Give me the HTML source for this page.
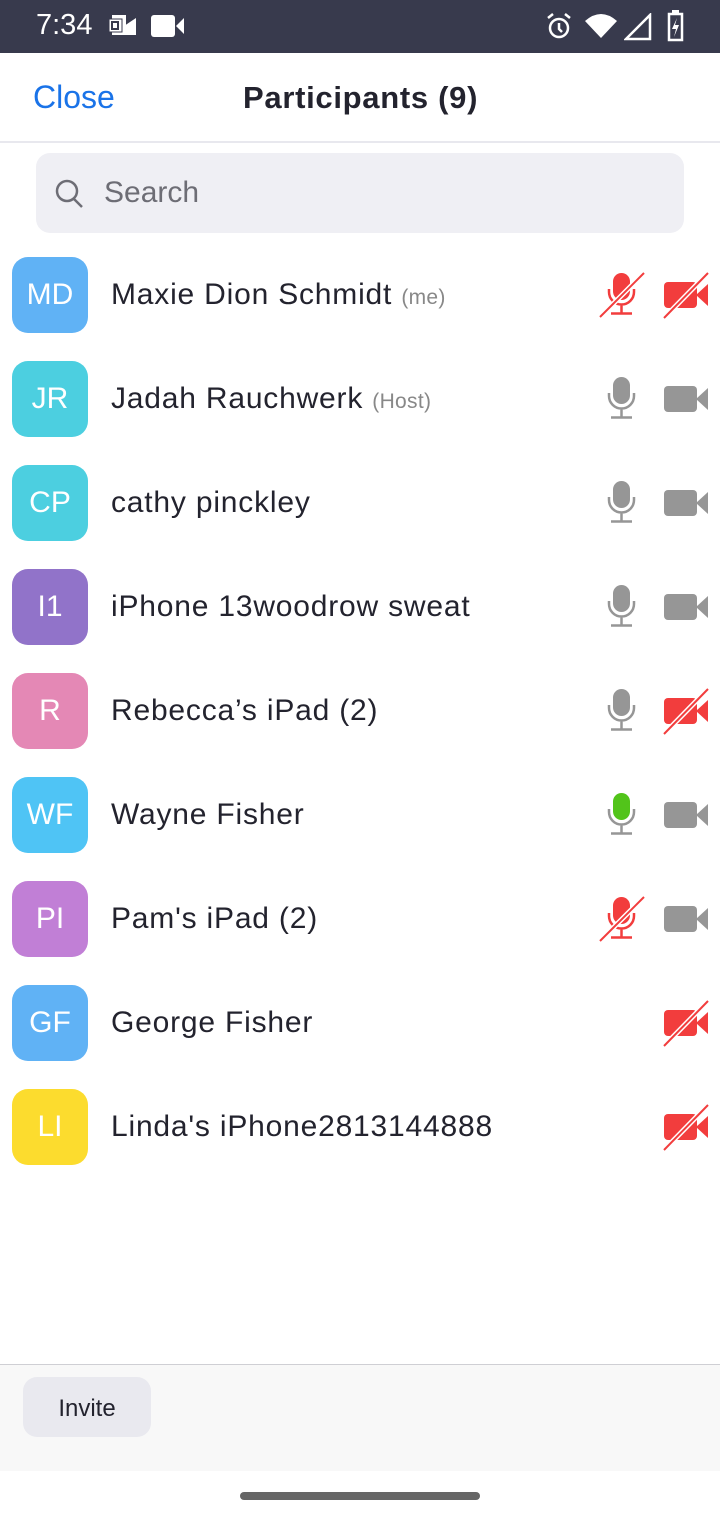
<!DOCTYPE html>
<html><head><meta charset="utf-8">
<style>
*{margin:0;padding:0;box-sizing:border-box}
body{width:720px;height:1520px;background:#fff;font-family:"Liberation Sans",sans-serif;position:relative;overflow:hidden}
.sb{position:absolute;left:0;top:0;width:720px;height:53px;background:#383a4d;color:#fff}
.abs{position:absolute}
.av{position:absolute;left:12px;width:76px;height:76px;border-radius:16px;color:#fff;font-size:30px;display:flex;align-items:center;justify-content:center}
.nm{position:absolute;left:111px;font-size:30px;letter-spacing:0.8px;color:#23232e;line-height:36px}
.nm span{font-size:21px;color:#888;letter-spacing:0.3px}
svg.ic{position:absolute}
</style></head><body>
<div class="sb">
<div class="abs" style="left:36px;top:9px;font-size:29px;">7:34</div>
<svg class="abs" style="left:108px;top:13px" width="30" height="26" viewBox="0 0 30 26"><rect x="4" y="2" width="14" height="20" fill="#fff"/><rect x="1" y="6" width="13" height="13" fill="#fff" stroke="#383a4d" stroke-width="1"/><rect x="4" y="9" width="6" height="7" fill="none" stroke="#383a4d" stroke-width="2"/><path d="M16 13 L28 5 V22 H16Z" fill="#fff"/></svg>
<svg class="abs" style="left:151px;top:15px" width="34" height="22"><rect x="0" y="0" width="24" height="22" rx="3" fill="#fff"/><path d="M25 11 L33 3 V19Z" fill="#fff"/></svg>
<svg class="abs" style="left:545px;top:12px" width="28" height="28" viewBox="0 0 28 28" fill="none" stroke="#fff" stroke-width="2.5"><circle cx="14" cy="16" r="9"/><path d="M14 11v6l3 3M3 6l5-4M25 6l-5-4"/></svg>
<svg class="abs" style="left:584px;top:13px" width="34" height="26"><path d="M1 8 Q17 -6 33 8 L17 25Z" fill="#fff"/></svg>
<svg class="abs" style="left:624px;top:13px" width="28" height="28"><path d="M2 26 L26 2 V26Z" fill="none" stroke="#fff" stroke-width="2.5"/></svg>
<svg class="abs" style="left:667px;top:10px" width="18" height="32"><rect x="5" y="0" width="7" height="4" fill="#fff"/><rect x="2" y="4" width="13" height="26" fill="none" stroke="#fff" stroke-width="2.5"/><path d="M10 8 L5 19 H9 L7 27 L12 15 H8Z" fill="#fff"/></svg>
</div>
<div class="abs" style="left:33px;top:79px;font-size:32px;color:#1a73e8">Close</div>
<div class="abs" style="left:243px;top:80px;font-size:31px;letter-spacing:0.7px;color:#23232e;font-weight:bold">Participants (9)</div>
<div class="abs" style="left:0;top:141px;width:720px;height:2px;background:#e8e8ee"></div>
<div class="abs" style="left:36px;top:153px;width:648px;height:80px;background:#efeff4;border-radius:14px"></div>
<svg class="abs" style="left:54px;top:178px" width="32" height="32" fill="none" stroke="#6d6d75" stroke-width="2.5"><circle cx="13" cy="13" r="10"/><path d="M20 21l8 8"/></svg>
<div class="abs" style="left:104px;top:176px;font-size:30px;color:#6d6d75">Search</div>

<div class="av" style="top:257px;background:#60b2f5">MD</div><div class="nm" style="top:277px">Maxie Dion Schmidt <span>(me)</span></div>
<div class="av" style="top:361px;background:#4ccfe0">JR</div><div class="nm" style="top:381px">Jadah Rauchwerk <span>(Host)</span></div>
<div class="av" style="top:465px;background:#4ccfe0">CP</div><div class="nm" style="top:485px">cathy pinckley</div>
<div class="av" style="top:569px;background:#9173c9">I1</div><div class="nm" style="top:589px">iPhone 13woodrow sweat</div>
<div class="av" style="top:673px;background:#e488b5">R</div><div class="nm" style="top:693px">Rebecca’s iPad (2)</div>
<div class="av" style="top:777px;background:#4fc4f5">WF</div><div class="nm" style="top:797px">Wayne Fisher</div>
<div class="av" style="top:881px;background:#c17fd6">PI</div><div class="nm" style="top:901px">Pam's iPad (2)</div>
<div class="av" style="top:985px;background:#60b2f5">GF</div><div class="nm" style="top:1005px">George Fisher</div>
<div class="av" style="top:1089px;background:#fcdc2e">LI</div><div class="nm" style="top:1109px">Linda's iPhone2813144888</div>

<svg class="ic" style="left:598px;top:271px" width="48" height="48"><rect x="15" y="2" width="17" height="27" rx="8.5" fill="#f23d3d"/><path d="M11 18v3a12.5 12.5 0 0 0 25 0v-3M23.5 33.5V42M13 42.5h21" fill="none" stroke="#f23d3d" stroke-width="2.5"/><path d="M2 46L46 2" stroke="#fff" stroke-width="5"/><path d="M2 46L46 2" stroke="#f23d3d" stroke-width="2"/></svg>
<svg class="ic" style="left:598px;top:375px" width="48" height="48"><rect x="15" y="2" width="17" height="27" rx="8.5" fill="#969696"/><path d="M11 18v3a12.5 12.5 0 0 0 25 0v-3M23.5 33.5V42M13 42.5h21" fill="none" stroke="#969696" stroke-width="2.5"/></svg>
<svg class="ic" style="left:598px;top:479px" width="48" height="48"><rect x="15" y="2" width="17" height="27" rx="8.5" fill="#969696"/><path d="M11 18v3a12.5 12.5 0 0 0 25 0v-3M23.5 33.5V42M13 42.5h21" fill="none" stroke="#969696" stroke-width="2.5"/></svg>
<svg class="ic" style="left:598px;top:583px" width="48" height="48"><rect x="15" y="2" width="17" height="27" rx="8.5" fill="#969696"/><path d="M11 18v3a12.5 12.5 0 0 0 25 0v-3M23.5 33.5V42M13 42.5h21" fill="none" stroke="#969696" stroke-width="2.5"/></svg>
<svg class="ic" style="left:598px;top:687px" width="48" height="48"><rect x="15" y="2" width="17" height="27" rx="8.5" fill="#969696"/><path d="M11 18v3a12.5 12.5 0 0 0 25 0v-3M23.5 33.5V42M13 42.5h21" fill="none" stroke="#969696" stroke-width="2.5"/></svg>
<svg class="ic" style="left:598px;top:791px" width="48" height="48"><rect x="15" y="2" width="17" height="27" rx="8.5" fill="#52c41a"/><path d="M11 18v3a12.5 12.5 0 0 0 25 0v-3M23.5 33.5V42M13 42.5h21" fill="none" stroke="#969696" stroke-width="2.5"/></svg>
<svg class="ic" style="left:598px;top:895px" width="48" height="48"><rect x="15" y="2" width="17" height="27" rx="8.5" fill="#f23d3d"/><path d="M11 18v3a12.5 12.5 0 0 0 25 0v-3M23.5 33.5V42M13 42.5h21" fill="none" stroke="#f23d3d" stroke-width="2.5"/><path d="M2 46L46 2" stroke="#fff" stroke-width="5"/><path d="M2 46L46 2" stroke="#f23d3d" stroke-width="2"/></svg>

<svg class="ic" style="left:662px;top:271px" width="58" height="48"><rect x="2" y="11" width="33" height="26" rx="4" fill="#f23d3d"/><path d="M34 24L46 13V35Z" fill="#f23d3d"/><path d="M2 47L46 2" stroke="#fff" stroke-width="5"/><path d="M2 47L46 2" stroke="#f23d3d" stroke-width="2"/></svg>
<svg class="ic" style="left:662px;top:375px" width="58" height="48"><rect x="2" y="11" width="33" height="26" rx="4" fill="#969696"/><path d="M34 24L46 13V35Z" fill="#969696"/></svg>
<svg class="ic" style="left:662px;top:479px" width="58" height="48"><rect x="2" y="11" width="33" height="26" rx="4" fill="#969696"/><path d="M34 24L46 13V35Z" fill="#969696"/></svg>
<svg class="ic" style="left:662px;top:583px" width="58" height="48"><rect x="2" y="11" width="33" height="26" rx="4" fill="#969696"/><path d="M34 24L46 13V35Z" fill="#969696"/></svg>
<svg class="ic" style="left:662px;top:687px" width="58" height="48"><rect x="2" y="11" width="33" height="26" rx="4" fill="#f23d3d"/><path d="M34 24L46 13V35Z" fill="#f23d3d"/><path d="M2 47L46 2" stroke="#fff" stroke-width="5"/><path d="M2 47L46 2" stroke="#f23d3d" stroke-width="2"/></svg>
<svg class="ic" style="left:662px;top:791px" width="58" height="48"><rect x="2" y="11" width="33" height="26" rx="4" fill="#969696"/><path d="M34 24L46 13V35Z" fill="#969696"/></svg>
<svg class="ic" style="left:662px;top:895px" width="58" height="48"><rect x="2" y="11" width="33" height="26" rx="4" fill="#969696"/><path d="M34 24L46 13V35Z" fill="#969696"/></svg>
<svg class="ic" style="left:662px;top:999px" width="58" height="48"><rect x="2" y="11" width="33" height="26" rx="4" fill="#f23d3d"/><path d="M34 24L46 13V35Z" fill="#f23d3d"/><path d="M2 47L46 2" stroke="#fff" stroke-width="5"/><path d="M2 47L46 2" stroke="#f23d3d" stroke-width="2"/></svg>
<svg class="ic" style="left:662px;top:1103px" width="58" height="48"><rect x="2" y="11" width="33" height="26" rx="4" fill="#f23d3d"/><path d="M34 24L46 13V35Z" fill="#f23d3d"/><path d="M2 47L46 2" stroke="#fff" stroke-width="5"/><path d="M2 47L46 2" stroke="#f23d3d" stroke-width="2"/></svg>

<div class="abs" style="left:0;top:1364px;width:720px;height:1px;background:#cfcfd4"></div>
<div class="abs" style="left:0;top:1365px;width:720px;height:106px;background:#f8f8f8"></div>
<div class="abs" style="left:23px;top:1377px;width:128px;height:60px;background:#e9e9ef;border-radius:14px;font-size:24px;color:#23232e;display:flex;align-items:center;justify-content:center;padding-top:3px">Invite</div>
<div class="abs" style="left:240px;top:1492px;width:240px;height:8px;border-radius:4px;background:#666"></div>
</body></html>
